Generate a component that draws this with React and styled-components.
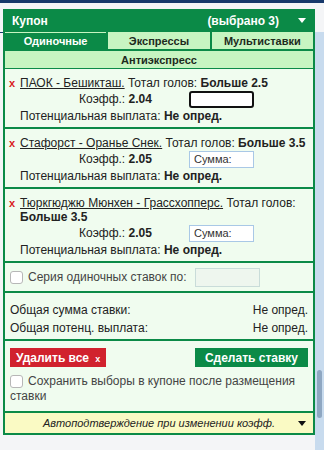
import { useState } from "react";
import styled, { createGlobalStyle } from "styled-components";

const GlobalStyle = createGlobalStyle`
    body {
        margin: 0;
        background: #f4f5f7;
        font-family: "Liberation Sans", Arial, sans-serif;
        color: #222;
    }
`;

const bets = [
    {
        id: 1,
        match: "ПАОК - Бешикташ.",
        market: "Тотал голов:",
        pick: "Больше 2.5",
        odds: "2.04",
        focused: true,
    },
    {
        id: 2,
        match: "Стафорст - Оранье Снек.",
        market: "Тотал голов:",
        pick: "Больше 3.5",
        odds: "2.05",
    },
    {
        id: 3,
        match: "Тюркгюджю Мюнхен - Грассхопперс.",
        market: "Тотал голов:",
        pick: "Больше 3.5",
        odds: "2.05",
    },
];

const tabs = ["Одиночные", "Экспрессы", "Мультиставки"];

function Caret({ color = "#fff" }) {
    return (
        <svg width="8" height="5" viewBox="0 0 8 5">
            <path d="M0 0 H8 L4 5 Z" fill={color} />
        </svg>
    );
}

export default function App() {
    const [activeTab, setActiveTab] = useState(0);

    return (
        <>
            <GlobalStyle />
            <TopBar />
            <Layout>
                <Gutter>
                    <GutterLine />
                </Gutter>
                <Panel>
                    <Header>
                        <span>Купон</span>
                        <HeaderRight>
                            (выбрано 3)
                            <Caret />
                        </HeaderRight>
                    </Header>
                    <Tabs>
                        {tabs.map((tab, i) => (
                            <Tab
                                key={tab}
                                $active={i === activeTab}
                                onClick={() => setActiveTab(i)}
                            >
                                {tab}
                            </Tab>
                        ))}
                        <Tab $wide>Антиэкспресс</Tab>
                    </Tabs>
                    <Content>
                        {bets.map((bet) => (
                            <Bet key={bet.id}>
                                <BetTitle>
                                    <RemoveMark>x</RemoveMark>
                                    <p>
                                        <MatchLink>{bet.match}</MatchLink>{" "}
                                        {bet.market} <strong>{bet.pick}</strong>
                                    </p>
                                </BetTitle>
                                <OddsRow>
                                    <Odds>
                                        Коэфф.: <strong>{bet.odds}</strong>
                                    </Odds>
                                    <StakeInput
                                        $focused={bet.focused}
                                        placeholder={bet.focused ? "" : "Сумма:"}
                                    />
                                </OddsRow>
                                <Payout>
                                    Потенциальная выплата: <strong>Не опред.</strong>
                                </Payout>
                            </Bet>
                        ))}
                        <Series>
                            <Check />
                            <span>Серия одиночных ставок по:</span>
                            <SeriesInput disabled />
                        </Series>
                        <Totals>
                            <TotalRow>
                                <span>Общая сумма ставки:</span>
                                <span>Не опред.</span>
                            </TotalRow>
                            <TotalRow>
                                <span>Общая потенц. выплата:</span>
                                <span>Не опред.</span>
                            </TotalRow>
                        </Totals>
                        <Actions>
                            <ButtonRow>
                                <ActionBtn type="button" $red>
                                    Удалить все <small>x</small>
                                </ActionBtn>
                                <ActionBtn type="button">Сделать ставку</ActionBtn>
                            </ButtonRow>
                            <div>
                                <Check />
                                Сохранить выборы в купоне после размещения ставки
                            </div>
                        </Actions>
                        <AutoConfirm>
                            <span>Автоподтверждение при изменении коэфф.</span>
                            <Caret color="#111" />
                        </AutoConfirm>
                    </Content>
                </Panel>
                <ScrollTrack>
                    <ScrollThumb />
                </ScrollTrack>
            </Layout>
        </>
    );
}

const TopBar = styled.div`
    height: 3px;
    background: #17396b;
`;

const Layout = styled.div`
    display: flex;
    align-items: stretch;
    min-height: 447px;
`;

const Gutter = styled.div`
    width: 3px;
    padding-top: 29px;
`;

const GutterLine = styled.div`
    height: 1px;
    background: #17396b;
`;

const Panel = styled.div`
    width: 312px;
    margin-top: 6px;
    align-self: flex-start;
    background: #0b8a47;
    padding: 0 2px 2px;
    box-sizing: border-box;
`;

const Header = styled.div`
    height: 23px;
    display: flex;
    align-items: center;
    justify-content: space-between;
    padding: 0 7px 0 7px;
    color: #fff;
    font-weight: bold;
    font-size: 12px;
`;

const HeaderRight = styled.div`
    display: flex;
    align-items: center;
    gap: 19px;
`;

const Tabs = styled.div`
    display: grid;
    grid-template-columns: repeat(3, 1fr);
    gap: 2px;
    margin-bottom: 1px;
`;

const Tab = styled.div`
    grid-column: ${(props) => (props.$wide ? "1 / -1" : "auto")};
    height: 16px;
    line-height: 16px;
    text-align: center;
    font-size: 11px;
    font-weight: bold;
    cursor: pointer;
    background: ${(props) => (props.$active ? "#0b8a47" : "#c7f5c1")};
    color: ${(props) => (props.$active ? "#fff" : "#1d2a1d")};
    border-top: 1px solid #c7f5c1;
`;

const Content = styled.div`
    background: #f0fcef;
`;

const Bet = styled.div`
    padding: 7px 2px 2px 3px;
    border-bottom: 2px solid #0b8a47;
    font-size: 12px;
`;

const BetTitle = styled.div`
    display: flex;
    line-height: 14px;

    p {
        margin: 0;
    }
`;

const RemoveMark = styled.span`
    width: 12px;
    flex-shrink: 0;
    color: #d9201c;
    font-weight: bold;
    font-size: 11px;
    padding-left: 1px;
    box-sizing: border-box;
`;

const MatchLink = styled.a`
    text-decoration: underline;
    color: #222;
    cursor: pointer;
`;

const OddsRow = styled.div`
    display: flex;
    align-items: center;
    padding-left: 71px;
    height: 18px;
`;

const Odds = styled.div`
    width: 110px;
`;

const StakeInput = styled.input`
    width: 65px;
    height: 17px;
    box-sizing: border-box;
    font-family: inherit;
    font-size: 11px;
    padding: 0 4px;
    background: #fff;
    border: ${(props) =>
        props.$focused ? "2px solid #111" : "1px solid #a9c8e6"};
    border-radius: ${(props) => (props.$focused ? "3px" : "0")};
    outline: none;

    &::placeholder {
        color: #333;
    }
`;

const Payout = styled.div`
    padding-left: 12px;
    line-height: 17px;
`;

const Check = styled.span`
    display: inline-block;
    width: 11px;
    height: 11px;
    border: 1px solid #b7b7b7;
    border-radius: 3px;
    background: #fff;
    flex-shrink: 0;
    vertical-align: -3px;
    margin-right: 5px;
`;

const Series = styled.div`
    display: flex;
    align-items: center;
    padding: 0 5px;
    height: 28px;
    font-size: 12px;
    color: #444;
    border-bottom: 2px solid #0b8a47;
`;

const SeriesInput = styled.input`
    width: 65px;
    height: 19px;
    box-sizing: border-box;
    margin-left: 8px;
    background: #eef6ee;
    border: 1px solid #c9dcd9;
`;

const Totals = styled.div`
    padding: 8px 5px 2px 5px;
    border-bottom: 2px solid #0b8a47;
    font-size: 12px;
`;

const TotalRow = styled.div`
    display: flex;
    justify-content: space-between;
    height: 18px;
    line-height: 18px;
`;

const Actions = styled.div`
    padding: 7px 5px 7px 5px;
    border-bottom: 2px solid #0b8a47;
    font-size: 12px;
    line-height: 15px;
    color: #444;
`;

const ButtonRow = styled.div`
    display: flex;
    justify-content: space-between;
    margin-bottom: 7px;
`;

const ActionBtn = styled.button`
    border: none;
    height: 19px;
    cursor: pointer;
    color: #fff;
    font-family: inherit;
    font-size: 12px;
    font-weight: bold;
    background-color: ${(props) => (props.$red ? "#d1222e" : "#0b8a47")};
    padding: ${(props) => (props.$red ? "0 6px" : "0 10px")};

    small {
        font-size: 9px;
        margin-left: 3px;
    }
`;

const AutoConfirm = styled.div`
    display: flex;
    align-items: center;
    height: 20px;
    padding: 0 7px 0 15px;
    background: #fafac4;
    font-size: 11px;
    font-style: italic;
    color: #222;

    span {
        flex: 1;
        text-align: center;
    }
`;

const ScrollTrack = styled.div`
    flex: 1;
    margin-top: 29px;
    background: #c8dbee;
    padding-left: 2px;
`;

const ScrollThumb = styled.div`
    width: 5px;
    height: 48px;
    margin-top: 338px;
    border-radius: 3px;
    background: #8fa7c2;
`;
